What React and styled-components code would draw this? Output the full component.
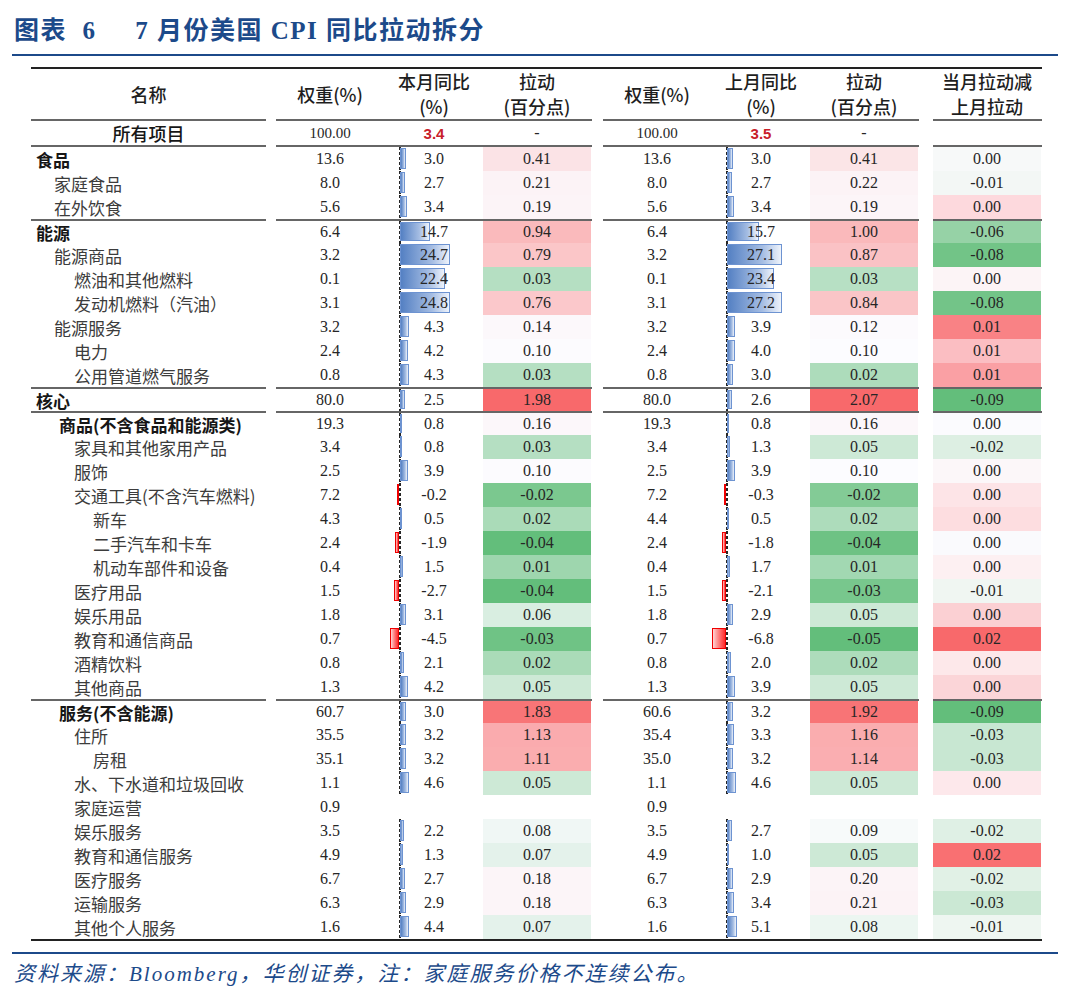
import React from "react";
import styled, { createGlobalStyle, css } from "styled-components";

const GlobalStyle = createGlobalStyle`
  html, body { margin: 0; padding: 0; background: #fff; }
  body { width: 1080px; height: 992px; overflow: hidden; }
`;

const BLUE = "#1c4a8a";

const Page = styled.div`
  width: 1080px;
`;

const TitleBar = styled.div`
  height: 54px;
  box-sizing: border-box;
  padding: 2px 0 0 14px;
  display: flex;
  align-items: center;
  font-family: "Liberation Serif", "Noto Sans CJK SC", serif;
  font-size: 25px;
  font-weight: 700;
  letter-spacing: 1.5px;
  color: ${BLUE};
  white-space: pre;
`;

const BlueRule = styled.div`
  height: 2px;
  margin: 0 22px 0 12px;
  background: ${BLUE};
`;

const Table = styled.div`
  width: 1011px;
  margin: 11px 0 0 31px;
  border-top: 2px solid #222;
  border-bottom: 2px solid #222;
`;

const Row = styled.div`
  display: flex;
  height: ${p => p.$h}px;
`;

const Segment = styled.div`
  box-sizing: border-box;
  height: 100%;
  display: flex;
  border-top: ${p => (p.$top ? "2px solid #666" : "none")};
  border-bottom: ${p => (p.$bottom ? "2px solid #666" : "none")};
`;

const NameSeg = styled(Segment)`
  width: 235px;
  align-items: center;
  justify-content: ${p => (p.$center ? "center" : "flex-start")};
  padding-left: ${p => (p.$center ? 0 : p.$indent - 31)}px;
  font-family: "Noto Sans CJK SC", sans-serif;
  font-size: ${p => (p.$center ? 18 : 17)}px;
  font-weight: ${p => (p.$bold ? 700 : p.$center ? 500 : 400)};
  color: ${p => (p.$bold || p.$center ? "#161616" : "#3c3c3c")};
  white-space: nowrap;
`;

const Group = styled(Segment)`
  width: ${p => p.$w}px;
  margin-left: ${p => p.$gap}px;
`;

const cellBase = css`
  height: 100%;
  box-sizing: border-box;
  display: flex;
  align-items: center;
  justify-content: center;
  font-family: "Liberation Serif", serif;
  font-size: 16px;
  color: #262626;
  white-space: nowrap;
`;

const WeightCell = styled.div`
  ${cellBase};
  width: 123px;
  padding-right: 15px;
  font-size: ${p => (p.$small ? 15 : 16)}px;
`;

const BarCell = styled.div`
  ${cellBase};
  position: relative;
  width: 84px;
  padding-right: 14px;
  background: ${p =>
    p.$axis
      ? "repeating-linear-gradient(to bottom, #262626 0 3px, transparent 3px 5px) left top / 2px 100% no-repeat"
      : "none"};
`;

const Bar = styled.div`
  position: absolute;
  top: 1px;
  bottom: 2px;
  box-sizing: border-box;
  ${p =>
    p.$neg
      ? css`
          right: 100%;
          background: linear-gradient(to left, #ff2a2a, #ff9c9c 70%, #ffd6d6);
          border: 1px solid #ef0000;
        `
      : css`
          left: 1px;
          background: linear-gradient(to right, #5480c3, #a5bde3 65%, #eef3fb);
          border: 1px solid #6d93d1;
        `}
`;

const Val = styled.span`
  position: relative;
`;

const RedVal = styled.span`
  font-family: "Liberation Sans", sans-serif;
  font-weight: 700;
  font-size: 15px;
  color: #c8202a;
`;

const HeatCell = styled.div`
  ${cellBase};
  width: 108px;
  background: ${p => p.$bg || "transparent"};
`;

const HeadCell = styled.div`
  height: 100%;
  box-sizing: border-box;
  width: ${p => p.$w}px;
  padding-right: ${p => p.$pr || 0}px;
  display: flex;
  flex-direction: column;
  align-items: center;
  justify-content: center;
  font-family: "Noto Sans CJK SC", sans-serif;
  font-size: 18px;
  font-weight: 500;
  line-height: 25px;
  color: #1e1e1e;
  white-space: nowrap;
`;

const Footer = styled.div`
  height: 36px;
  padding-left: 14px;
  display: flex;
  align-items: center;
  font-family: "Liberation Serif", "Noto Sans CJK SC", serif;
  font-style: italic;
  font-size: 21px;
  letter-spacing: 2px;
  color: ${BLUE};
  white-space: nowrap;
`;

// Excel-like 3 colour scale: green (min) – white (median) – red (max)
const GREEN = [99, 190, 123];
const WHITE = [252, 252, 255];
const RED = [248, 105, 107];

const heat = (v, min, mid, max) => {
  if (v == null) return null;
  const to = v <= mid ? GREEN : RED;
  const t = v <= mid ? (mid - v) / (mid - min) : (v - mid) / (max - mid);
  const c = WHITE.map((w, i) => Math.round(w + (to[i] - w) * Math.min(1, t)));
  return `rgb(${c.join(",")})`;
};

const rows = [
  { n: "食品", i: 36, b: 1, w1: "13.6", y1: 3.0, p1: 0.41, w2: "13.6", y2: 3.0, p2: 0.41, d: "0.00", dc: "#f7f9f9" },
  { n: "家庭食品", i: 54, w1: "8.0", y1: 2.7, p1: 0.21, w2: "8.0", y2: 2.7, p2: 0.22, d: "-0.01", dc: "#f3f7f5" },
  { n: "在外饮食", i: 54, w1: "5.6", y1: 3.4, p1: 0.19, w2: "5.6", y2: 3.4, p2: 0.19, d: "0.00", dc: "#fdd9dd" },
  { n: "能源", i: 36, b: 1, top: 1, w1: "6.4", y1: 14.7, p1: 0.94, w2: "6.4", y2: 15.7, p2: 1.0, d: "-0.06", dc: "#96d2a6" },
  { n: "能源商品", i: 54, w1: "3.2", y1: 24.7, p1: 0.79, w2: "3.2", y2: 27.1, p2: 0.87, d: "-0.08", dc: "#72c487" },
  { n: "燃油和其他燃料", i: 74, w1: "0.1", y1: 22.4, p1: 0.03, w2: "0.1", y2: 23.4, p2: 0.03, d: "0.00", dc: "#fcf4f6" },
  { n: "发动机燃料（汽油）", i: 74, w1: "3.1", y1: 24.8, p1: 0.76, w2: "3.1", y2: 27.2, p2: 0.84, d: "-0.08", dc: "#73c488" },
  { n: "能源服务", i: 54, w1: "3.2", y1: 4.3, p1: 0.14, w2: "3.2", y2: 3.9, p2: 0.12, d: "0.01", dc: "#f98285" },
  { n: "电力", i: 74, w1: "2.4", y1: 4.2, p1: 0.1, w2: "2.4", y2: 4.0, p2: 0.1, d: "0.01", dc: "#fbbec2" },
  { n: "公用管道燃气服务", i: 74, w1: "0.8", y1: 4.3, p1: 0.03, w2: "0.8", y2: 3.0, p2: 0.02, d: "0.01", dc: "#faa0a4" },
  { n: "核心", i: 36, b: 1, top: 1, w1: "80.0", y1: 2.5, p1: 1.98, w2: "80.0", y2: 2.6, p2: 2.07, d: "-0.09", dc: "#63be7b" },
  { n: "商品(不含食品和能源类)", i: 59, b: 1, top: 1, w1: "19.3", y1: 0.8, p1: 0.16, w2: "19.3", y2: 0.8, p2: 0.16, d: "0.00", dc: "#fbfbfe" },
  { n: "家具和其他家用产品", i: 74, w1: "3.4", y1: 0.8, p1: 0.03, w2: "3.4", y2: 1.3, p2: 0.05, d: "-0.02", dc: "#ddefe3" },
  { n: "服饰", i: 74, w1: "2.5", y1: 3.9, p1: 0.1, w2: "2.5", y2: 3.9, p2: 0.1, d: "0.00", dc: "#fcf7f9" },
  { n: "交通工具(不含汽车燃料)", i: 74, w1: "7.2", y1: -0.2, p1: -0.02, w2: "7.2", y2: -0.3, p2: -0.02, d: "0.00", dc: "#fde4e7" },
  { n: "新车", i: 93, w1: "4.3", y1: 0.5, p1: 0.02, w2: "4.4", y2: 0.5, p2: 0.02, d: "0.00", dc: "#fddde0" },
  { n: "二手汽车和卡车", i: 93, w1: "2.4", y1: -1.9, p1: -0.04, w2: "2.4", y2: -1.8, p2: -0.04, d: "0.00", dc: "#fafafd" },
  { n: "机动车部件和设备", i: 93, w1: "0.4", y1: 1.5, p1: 0.01, w2: "0.4", y2: 1.7, p2: 0.01, d: "0.00", dc: "#fdf0f2" },
  { n: "医疗用品", i: 74, w1: "1.5", y1: -2.7, p1: -0.04, w2: "1.5", y2: -2.1, p2: -0.03, d: "-0.01", dc: "#f0f6f2" },
  { n: "娱乐用品", i: 74, w1: "1.8", y1: 3.1, p1: 0.06, w2: "1.8", y2: 2.9, p2: 0.05, d: "0.00", dc: "#fbd0d3" },
  { n: "教育和通信商品", i: 74, w1: "0.7", y1: -4.5, p1: -0.03, w2: "0.7", y2: -6.8, p2: -0.05, d: "0.02", dc: "#f8696b" },
  { n: "酒精饮料", i: 74, w1: "0.8", y1: 2.1, p1: 0.02, w2: "0.8", y2: 2.0, p2: 0.02, d: "0.00", dc: "#fde8ea" },
  { n: "其他商品", i: 74, w1: "1.3", y1: 4.2, p1: 0.05, w2: "1.3", y2: 3.9, p2: 0.05, d: "0.00", dc: "#fbd5d8" },
  { n: "服务(不含能源)", i: 59, b: 1, top: 1, w1: "60.7", y1: 3.0, p1: 1.83, w2: "60.6", y2: 3.2, p2: 1.92, d: "-0.09", dc: "#63be7b" },
  { n: "住所", i: 74, w1: "35.5", y1: 3.2, p1: 1.13, w2: "35.4", y2: 3.3, p2: 1.16, d: "-0.03", dc: "#c8e7d2" },
  { n: "房租", i: 93, w1: "35.1", y1: 3.2, p1: 1.11, w2: "35.0", y2: 3.2, p2: 1.14, d: "-0.03", dc: "#c8e7d2" },
  { n: "水、下水道和垃圾回收", i: 74, w1: "1.1", y1: 4.6, p1: 0.05, w2: "1.1", y2: 4.6, p2: 0.05, d: "0.00", dc: "#fde8eb" },
  { n: "家庭运营", i: 74, w1: "0.9", w2: "0.9" },
  { n: "娱乐服务", i: 74, w1: "3.5", y1: 2.2, p1: 0.08, w2: "3.5", y2: 2.7, p2: 0.09, d: "-0.02", dc: "#dff0e5" },
  { n: "教育和通信服务", i: 74, w1: "4.9", y1: 1.3, p1: 0.07, w2: "4.9", y2: 1.0, p2: 0.05, d: "0.02", dc: "#f97072" },
  { n: "医疗服务", i: 74, w1: "6.7", y1: 2.7, p1: 0.18, w2: "6.7", y2: 2.9, p2: 0.2, d: "-0.02", dc: "#e1f1e6" },
  { n: "运输服务", i: 74, w1: "6.3", y1: 2.9, p1: 0.18, w2: "6.3", y2: 3.4, p2: 0.21, d: "-0.03", dc: "#cbe8d4" },
  { n: "其他个人服务", i: 74, w1: "1.6", y1: 4.4, p1: 0.07, w2: "1.6", y2: 5.1, p2: 0.08, d: "-0.01", dc: "#eef6f1" },
];

const PX_PER_UNIT = 2.02;

const YoY = ({ v }) => {
  if (v == null) return <BarCell />;
  const len = Math.max(1, Math.round(Math.abs(v) * PX_PER_UNIT));
  return (
    <BarCell $axis>
      <Bar $neg={v < 0} style={{ width: len }} />
      <Val>{v.toFixed(1)}</Val>
    </BarCell>
  );
};

const Pull = ({ v, range }) => (
  <HeatCell $bg={v == null ? null : heat(v, ...range)}>
    {v == null ? "" : v.toFixed(2)}
  </HeatCell>
);

const RANGE1 = [-0.04, 0.09, 1.98];
const RANGE2 = [-0.05, 0.095, 2.07];

const HeaderRow = () => (
  <Row $h={52}>
    <NameSeg as={HeadCell} $w={235} $bottom>名称</NameSeg>
    <Group $w={316} $gap={10} $bottom>
      <HeadCell $w={123} $pr={15}>权重(%)</HeadCell>
      <HeadCell $w={84} $pr={14}>
        <span>本月同比</span>
        <span>(%)</span>
      </HeadCell>
      <HeadCell $w={108}>
        <span>拉动</span>
        <span>(百分点)</span>
      </HeadCell>
    </Group>
    <Group $w={316} $gap={11} $bottom>
      <HeadCell $w={123} $pr={15}>权重(%)</HeadCell>
      <HeadCell $w={84} $pr={14}>
        <span>上月同比</span>
        <span>(%)</span>
      </HeadCell>
      <HeadCell $w={108}>
        <span>拉动</span>
        <span>(百分点)</span>
      </HeadCell>
    </Group>
    <Group $w={109} $gap={14} $bottom>
      <HeadCell $w={108}>
        <span>当月拉动减</span>
        <span>上月拉动</span>
      </HeadCell>
    </Group>
  </Row>
);

const TotalRow = () => (
  <Row $h={26}>
    <NameSeg $center $bottom>所有项目</NameSeg>
    <Group $w={316} $gap={10} $bottom>
      <WeightCell $small>100.00</WeightCell>
      <BarCell>
        <RedVal>3.4</RedVal>
      </BarCell>
      <HeatCell>-</HeatCell>
    </Group>
    <Group $w={316} $gap={11} $bottom>
      <WeightCell $small>100.00</WeightCell>
      <BarCell>
        <RedVal>3.5</RedVal>
      </BarCell>
      <HeatCell>-</HeatCell>
    </Group>
    <Group $w={109} $gap={14} $bottom />
  </Row>
);

const DataRow = ({ r }) => (
  <Row $h={24}>
    <NameSeg $indent={r.i} $bold={r.b} $top={r.top}>
      {r.n}
    </NameSeg>
    <Group $w={316} $gap={10} $top={r.top}>
      <WeightCell>{r.w1}</WeightCell>
      <YoY v={r.y1} />
      <Pull v={r.p1} range={RANGE1} />
    </Group>
    <Group $w={316} $gap={11} $top={r.top}>
      <WeightCell>{r.w2}</WeightCell>
      <YoY v={r.y2} />
      <Pull v={r.p2} range={RANGE2} />
    </Group>
    <Group $w={109} $gap={14} $top={r.top}>
      <HeatCell $bg={r.dc}>{r.d || ""}</HeatCell>
    </Group>
  </Row>
);

export default function App() {
  return (
    <Page>
      <GlobalStyle />
      <TitleBar>{"图表  6     7 月份美国 CPI 同比拉动拆分"}</TitleBar>
      <BlueRule />
      <Table>
        <HeaderRow />
        <TotalRow />
        {rows.map(r => (
          <DataRow key={r.n} r={r} />
        ))}
      </Table>
      <BlueRule style={{ marginTop: 11 }} />
      <Footer>资料来源：Bloomberg，华创证券，注：家庭服务价格不连续公布。</Footer>
    </Page>
  );
}
